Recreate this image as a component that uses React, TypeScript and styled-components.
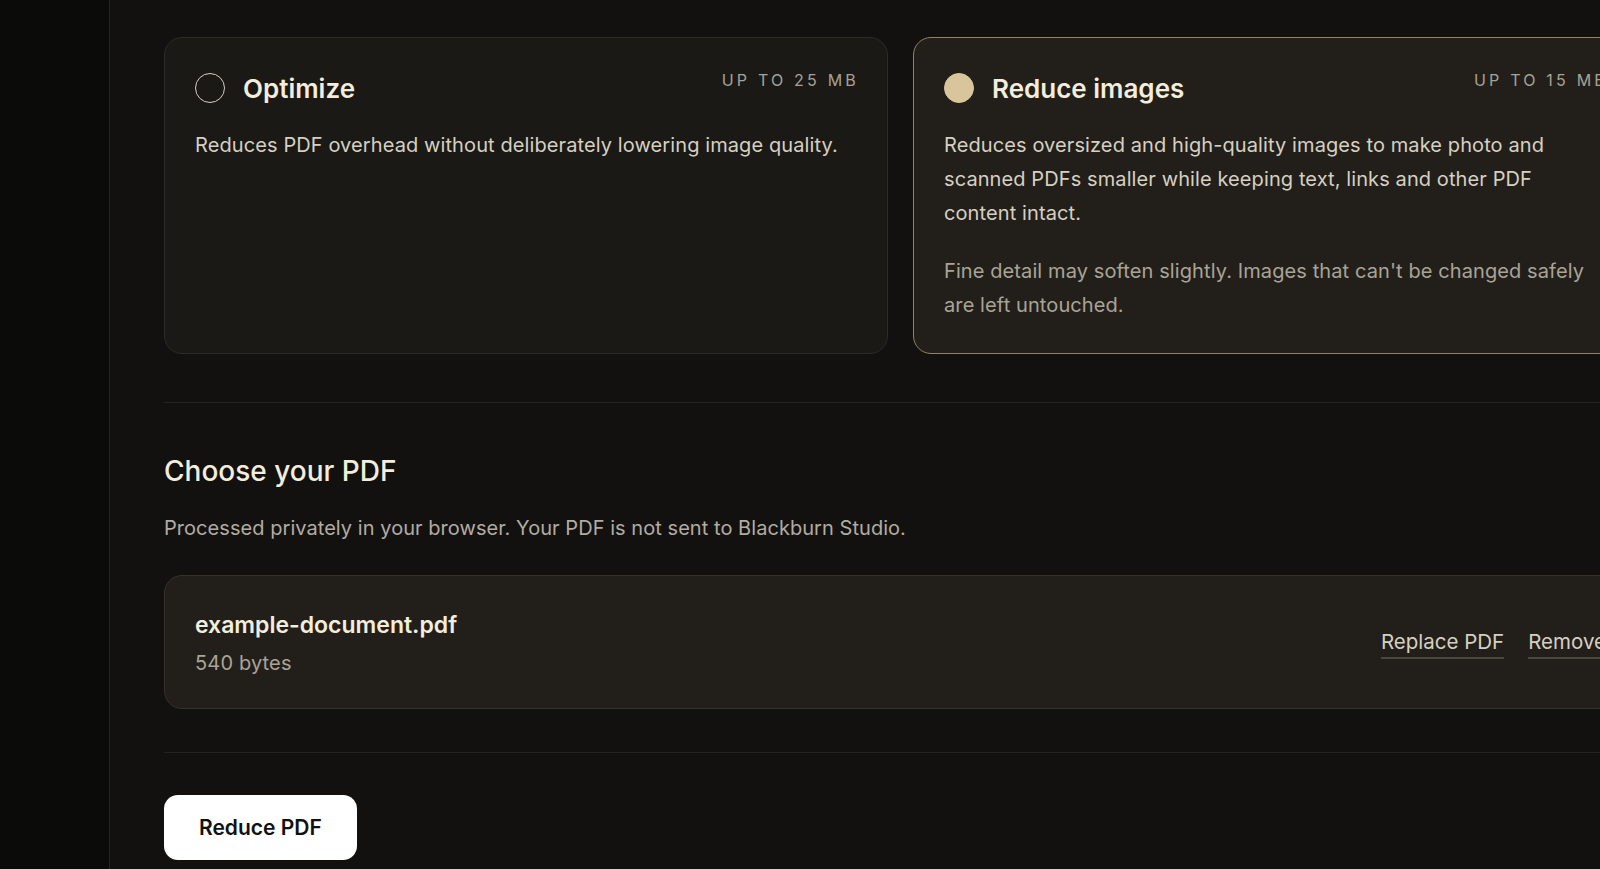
import * as React from 'react';
import styled, { createGlobalStyle } from 'styled-components';

const GlobalStyle = createGlobalStyle`
  html, body {
    margin: 0;
    padding: 0;
    background: #121110;
    overflow: hidden;
  }

  body {
    font-family: Inter, "Noto Sans", "Liberation Sans", sans-serif;
    color: #f1ebdc;
    -webkit-font-smoothing: antialiased;
  }

  * {
    box-sizing: border-box;
  }
`;

const Shell = styled.div`
  display: flex;
  min-height: 869px;
  width: 1700px;
`;

const Sidebar = styled.aside`
  flex: 0 0 110px;
  background: #0b0b0a;
  border-right: 1px solid #262421;
`;

const Main = styled.main`
  flex: 0 0 auto;
  width: 1527px;
  padding: 37px 0 40px 54px;
`;

const ModeGrid = styled.div`
  display: grid;
  grid-template-columns: 724px 724px;
  gap: 25px;
  margin-bottom: 48px;
`;

const ModeCard = styled.div<{ $active?: boolean }>`
  height: 317px;
  padding: 29px 30px;
  border-radius: 18px;
  border: 1px solid ${(p) => (p.$active ? '#8f8366' : '#2d2b27')};
  background: ${(p) => (p.$active ? '#221f1a' : '#1a1915')};
`;

const CardHead = styled.div`
  display: flex;
  align-items: flex-start;
  justify-content: space-between;
`;

const TitleRow = styled.div`
  display: flex;
  align-items: center;
  gap: 18px;
  height: 42px;
`;

const Radio = styled.span<{ $checked?: boolean }>`
  width: 30px;
  height: 30px;
  border-radius: 50%;
  border: 1.5px solid ${(p) => (p.$checked ? '#d9c59c' : '#d6d0c2')};
  background: ${(p) => (p.$checked ? '#d9c59c' : 'transparent')};
`;

const CardTitle = styled.h3`
  margin: 0;
  font-size: 26px;
  font-weight: 600;
  color: #f3eddd;
`;

const Limit = styled.span`
  font-size: 16px;
  line-height: 26px;
  letter-spacing: 0.2em;
  color: #a7a296;
  white-space: nowrap;
  margin-right: -2px;
`;

const CardBody = styled.div`
  margin-top: 19px;
`;

const CardText = styled.p<{ $muted?: boolean }>`
  margin: 0;
  font-size: 20px;
  line-height: 34px;
  letter-spacing: 0.1px;
  color: ${(p) => (p.$muted ? '#a9a497' : '#d6d0c2')};

  & + & {
    margin-top: 24px;
  }
`;

const Divider = styled.hr`
  margin: 0;
  border: 0;
  border-top: 1px solid #252320;
`;

const Section = styled.section`
  padding: 51px 0 43px;
`;

const Heading = styled.h2`
  margin: 0;
  font-size: 28px;
  line-height: 34px;
  font-weight: 500;
  color: #f3eddd;
`;

const Subtitle = styled.p`
  margin: 25px 0 0;
  font-size: 20px;
  line-height: 30px;
  letter-spacing: 0.05px;
  color: #b1aca1;
`;

const FileCard = styled.div`
  display: flex;
  align-items: center;
  justify-content: space-between;
  margin-top: 32px;
  padding: 33px 30px 30px;
  border-radius: 18px;
  border: 1px solid #35322c;
  background: #221f1a;
`;

const FileName = styled.div`
  font-size: 23px;
  line-height: 32px;
  font-weight: 600;
  color: #f3eddd;
`;

const FileSize = styled.div`
  margin-top: 7px;
  font-size: 20px;
  line-height: 30px;
  letter-spacing: 0.15px;
  color: #a9a497;
`;

const Actions = styled.div`
  display: flex;
  gap: 24px;
`;

const LinkButton = styled.button`
  padding: 0 0 2px;
  background: none;
  border: 0;
  border-bottom: 2px solid #4a463e;
  font: inherit;
  font-size: 20.5px;
  line-height: 26px;
  color: #d6d0c2;
  cursor: pointer;
`;

const Footer = styled.div`
  padding-top: 42px;
`;

const PrimaryButton = styled.button`
  height: 65px;
  padding: 0 35px;
  border: 0;
  border-radius: 14px;
  background: #ffffff;
  font: inherit;
  font-size: 21px;
  font-weight: 600;
  color: #111;
  cursor: pointer;
`;

export default function App() {
  return (
    <>
      <GlobalStyle />
      <Shell>
        <Sidebar />
        <Main>
          <ModeGrid>
            <ModeCard>
              <CardHead>
                <TitleRow>
                  <Radio />
                  <CardTitle>Optimize</CardTitle>
                </TitleRow>
                <Limit>UP TO 25 MB</Limit>
              </CardHead>
              <CardBody>
                <CardText>Reduces PDF overhead without deliberately lowering image quality.</CardText>
              </CardBody>
            </ModeCard>
            <ModeCard $active>
              <CardHead>
                <TitleRow>
                  <Radio $checked />
                  <CardTitle>Reduce images</CardTitle>
                </TitleRow>
                <Limit>UP TO 15 MB</Limit>
              </CardHead>
              <CardBody>
                <CardText>
                  Reduces oversized and high-quality images to make photo and scanned PDFs smaller while
                  keeping text, links and other PDF content intact.
                </CardText>
                <CardText $muted>
                  Fine detail may soften slightly. Images that can't be changed safely are left untouched.
                </CardText>
              </CardBody>
            </ModeCard>
          </ModeGrid>

          <Divider />

          <Section>
            <Heading>Choose your PDF</Heading>
            <Subtitle>Processed privately in your browser. Your PDF is not sent to Blackburn Studio.</Subtitle>
            <FileCard>
              <div>
                <FileName>example-document.pdf</FileName>
                <FileSize>540 bytes</FileSize>
              </div>
              <Actions>
                <LinkButton>Replace PDF</LinkButton>
                <LinkButton>Remove</LinkButton>
              </Actions>
            </FileCard>
          </Section>

          <Divider />

          <Footer>
            <PrimaryButton>Reduce PDF</PrimaryButton>
          </Footer>
        </Main>
      </Shell>
    </>
  );
}
